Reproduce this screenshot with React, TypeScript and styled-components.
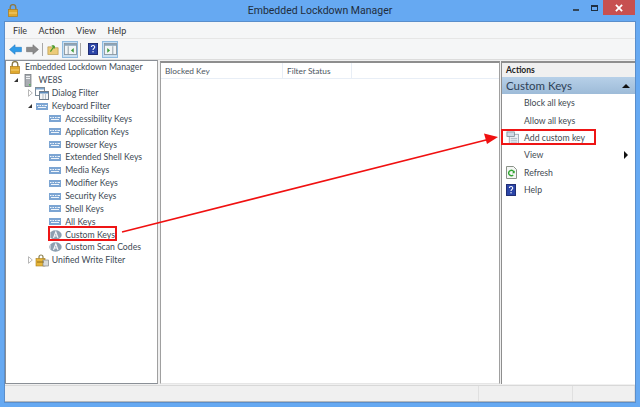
import styled, { createGlobalStyle } from "styled-components";

const GlobalStyle = createGlobalStyle`
  html, body { margin: 0; padding: 0; }
  body { font-family: Lato, Roboto, sans-serif; }
`;

const Lock = () => (
  <svg width="10" height="13" viewBox="0 0 10 13">
    <path d="M2.2 6V3.4a2.8 2.8 0 0 1 5.6 0V6" fill="none" stroke="#8a7a4a" strokeWidth="1.4" />
    <rect x="0.5" y="5.5" width="9" height="7" fill="#e0a92e" stroke="#b07d18" strokeWidth="0.7" />
    <rect x="1" y="8.5" width="8" height="1" fill="#f3d27a" />
  </svg>
);

const Server = () => (
  <svg width="12" height="13" viewBox="0 0 12 13">
    <rect x="3" y="0.5" width="6" height="12" fill="#a9adb2" stroke="#6d7278" strokeWidth="0.7" />
    <rect x="4" y="2" width="4" height="1" fill="#eef0f2" />
    <rect x="4" y="4" width="4" height="1" fill="#eef0f2" />
    <rect x="7" y="10" width="1.5" height="1.5" fill="#4cc04c" />
  </svg>
);

const Dialogs = () => (
  <svg width="14" height="13" viewBox="0 0 14 13">
    <rect x="0.5" y="0.5" width="9" height="8" fill="#fff" stroke="#7d8b99" />
    <rect x="1" y="1" width="8" height="1.5" fill="#7ea6cf" />
    <rect x="4.5" y="4.5" width="9" height="8" fill="#f4f6f8" stroke="#6f7d8b" />
    <rect x="5" y="5" width="8" height="1.5" fill="#5d8cbc" />
    <path d="M8 7v5M10.5 7v5" stroke="#9aa7b3" strokeWidth="0.7" />
  </svg>
);

const KeyboardIcon = () => (
  <svg width="12" height="7" viewBox="0 0 12 7">
    <rect width="12" height="7" fill="#7ca5d3" />
    <path d="M1 2.5h1.5M3.5 2.5H5M6 2.5h1.5M8.5 2.5H11M2 4.5h8" stroke="#eef4fa" strokeWidth="1" />
  </svg>
);

const CustomKeyIcon = () => (
  <svg width="13" height="10" viewBox="0 0 13 10">
    <ellipse cx="6.5" cy="5" rx="6.2" ry="4.7" fill="#8d9fb0" />
    <path d="M4.5 8 6.8 1.8 9 8M5.4 6h2.8" fill="none" stroke="#f4f6f8" strokeWidth="1.1" />
    <path d="M1.5 3v4" stroke="#c9d2da" strokeWidth="0.8" />
  </svg>
);

const FilterIcon = () => (
  <svg width="14" height="13" viewBox="0 0 14 13">
    <path d="M4 5V3a2 2 0 0 1 4 0v2" fill="none" stroke="#8a8152" strokeWidth="1.2" />
    <rect x="1" y="4.5" width="9" height="7.5" fill="#e6b53a" stroke="#a97e1c" strokeWidth="0.6" />
    <rect x="8" y="6" width="5.5" height="6" fill="#d9dcdd" stroke="#6f7477" strokeWidth="0.6" />
    <path d="M2 8h7" stroke="#7a5a10" strokeWidth="0.8" />
  </svg>
);

const ExpandOutline = () => (
  <svg width="5" height="8" viewBox="0 0 5 8">
    <path d="M0.5 0.7 4.3 4 0.5 7.3Z" fill="#fff" stroke="#a6a6a6" strokeWidth="0.8" />
  </svg>
);

const BackArrow = () => (
  <svg width="13" height="11" viewBox="0 0 14 12">
    <path d="M0.5 6 6.5 0.8V3.6H13.5V8.4H6.5V11.2Z" fill="#2f9be8" stroke="#1d78c4" strokeWidth="0.6" />
  </svg>
);

const ForwardArrow = () => (
  <svg width="13" height="11" viewBox="0 0 14 12">
    <path d="M13.5 6 7.5 0.8V3.6H0.5V8.4H7.5V11.2Z" fill="#8b8b8b" stroke="#6e6e6e" strokeWidth="0.6" />
  </svg>
);

const UpFolder = () => (
  <svg width="12" height="12" viewBox="0 0 14 14">
    <path d="M1 4.5h4l1 1h7v8H1Z" fill="#eccb78" stroke="#b08f3e" strokeWidth="0.7" />
    <path d="M4 10 8.5 3.5M8.5 3.5H5.5M8.5 3.5V6.5" fill="none" stroke="#4d9c2e" strokeWidth="1.5" />
  </svg>
);

const HelpIcon = ({ size = 10 }: { size?: number }) => (
  <svg width={size} height={size + 2} viewBox="0 0 11 13">
    <rect x="0.5" y="0.5" width="10" height="12" fill="#2b45a8" stroke="#16246b" />
    <path d="M3.7 4.4C3.8 2 7.4 2 7.4 4.3 7.4 5.8 5.5 5.8 5.5 7.6" fill="none" stroke="#fff" strokeWidth="1.2" />
    <rect x="4.9" y="8.8" width="1.3" height="1.4" fill="#fff" />
  </svg>
);

const PaneToggle = ({ flip }: { flip?: boolean }) => (
  <svg width="13" height="12" viewBox="0 0 14 13">
    <rect x="0.5" y="0.5" width="13" height="12" fill="#f2f5f7" stroke="#8c99a3" />
    <rect x="1" y="1" width="12" height="2" fill="#8aa5bc" />
    {flip ? (
      <>
        <path d="M9.5 3.5v9" stroke="#8c99a3" />
        <path d="M3.5 5.5 6.5 8 3.5 10.5Z" fill="#3f9c3a" />
      </>
    ) : (
      <>
        <path d="M4.5 3.5v9" stroke="#8c99a3" />
        <path d="M10.5 5.5 7.5 8 10.5 10.5Z" fill="#3f9c3a" />
      </>
    )}
  </svg>
);

const AddKeyIcon = () => (
  <svg width="13" height="13" viewBox="0 0 14 14">
    <rect x="3.5" y="3.5" width="10" height="10" fill="#eef2f6" stroke="#8a99a8" strokeWidth="0.8" />
    <rect x="1" y="1" width="8" height="5" fill="#cfdbe6" stroke="#76858f" strokeWidth="0.8" />
    <path d="M5 8h7M5 10h7M5 12h7" stroke="#9dacb9" strokeWidth="0.8" />
  </svg>
);

const RefreshIcon = () => (
  <svg width="11" height="13" viewBox="0 0 11 13">
    <path d="M0.5 0.5H7.5L10.5 3.5V12.5H0.5Z" fill="#f4f6f4" stroke="#8a9288" />
    <path d="M8 6.5A2.7 2.7 0 1 0 7.2 9" fill="none" stroke="#31a531" strokeWidth="1.4" />
    <path d="M8.6 4.4V7.2H6Z" fill="#31a531" />
  </svg>
);

type TreeItem = { label: string; depth: number; expander?: "open" | "closed"; icon: React.ReactNode };

const KEY_ITEMS = [
  "Accessibility Keys",
  "Application Keys",
  "Browser Keys",
  "Extended Shell Keys",
  "Media Keys",
  "Modifier Keys",
  "Security Keys",
  "Shell Keys",
  "All Keys",
];

const TREE: TreeItem[] = [
  { label: "Embedded Lockdown Manager", depth: 0, icon: <Lock /> },
  { label: "WE8S", depth: 1, expander: "open", icon: <Server /> },
  { label: "Dialog Filter", depth: 2, expander: "closed", icon: <Dialogs /> },
  { label: "Keyboard Filter", depth: 2, expander: "open", icon: <KeyboardIcon /> },
  ...KEY_ITEMS.map((label) => ({ label, depth: 3, icon: <KeyboardIcon /> })),
  { label: "Custom Keys", depth: 3, icon: <CustomKeyIcon /> },
  { label: "Custom Scan Codes", depth: 3, icon: <CustomKeyIcon /> },
  { label: "Unified Write Filter", depth: 2, expander: "closed", icon: <FilterIcon /> },
];

const App = () => (
  <Window>
    <GlobalStyle />
    <TitleBar>
      <TitleIcon>
        <Lock />
      </TitleIcon>
      <TitleText>Embedded Lockdown Manager</TitleText>
      <WindowButtons>
        <Minimize />
        <Maximize />
        <CloseButton>
          <svg width="8" height="8" viewBox="0 0 9 9">
            <path d="M1 1 8 8M8 1 1 8" stroke="#fff" strokeWidth="2" />
          </svg>
        </CloseButton>
      </WindowButtons>
    </TitleBar>

    <Content>
      <MenuBar>
        <MenuItem>File</MenuItem>
        <MenuItem>Action</MenuItem>
        <MenuItem>View</MenuItem>
        <MenuItem>Help</MenuItem>
      </MenuBar>

      <Toolbar>
        <ToolButton>
          <BackArrow />
        </ToolButton>
        <ToolButton>
          <ForwardArrow />
        </ToolButton>
        <ToolSeparator />
        <ToolButton>
          <UpFolder />
        </ToolButton>
        <ToolButton $active>
          <PaneToggle />
        </ToolButton>
        <ToolSeparator $wide />
        <ToolButton>
          <HelpIcon />
        </ToolButton>
        <ToolButton $active>
          <PaneToggle flip />
        </ToolButton>
      </Toolbar>

      <Panes>
        <TreePane>
          {TREE.map((item) => (
            <TreeRow key={item.label} $depth={item.depth}>
              <Expander>
                {item.expander === "open" && <OpenTriangle />}
                {item.expander === "closed" && (
                  <ClosedTriangle>
                    <ExpandOutline />
                  </ClosedTriangle>
                )}
              </Expander>
              <TreeIcon>{item.icon}</TreeIcon>
              <TreeLabel>{item.label}</TreeLabel>
            </TreeRow>
          ))}
        </TreePane>

        <ListPane>
          <ListHeader>
            <HeaderCell $width={122}>Blocked Key</HeaderCell>
            <HeaderCell $width={69}>Filter Status</HeaderCell>
          </ListHeader>
        </ListPane>

        <ActionsPane>
          <ActionsTitle>Actions</ActionsTitle>
          <ActionsGroup>
            Custom Keys
            <GroupCaret />
          </ActionsGroup>
          <ActionRow>Block all keys</ActionRow>
          <ActionRow>Allow all keys</ActionRow>
          <ActionRow $icon={<AddKeyIcon />}>Add custom key</ActionRow>
          <ActionRow $submenu>View</ActionRow>
          <ActionRow $icon={<RefreshIcon />}>Refresh</ActionRow>
          <ActionRow $icon={<HelpIcon />}>Help</ActionRow>
        </ActionsPane>
      </Panes>

      <StatusBar>
        <StatusCell $grow />
        <StatusCell $width={94} />
        <StatusCell $width={62} />
      </StatusBar>
    </Content>

    <CustomKeysBox />
    <AddKeyBox />
    <Annotation width="640" height="407" viewBox="0 0 640 407">
      <line x1="122" y1="232" x2="488" y2="139.5" stroke="#f01010" strokeWidth="1.5" />
      <path d="M498 137 484 133.5 487 144Z" fill="#f01010" />
    </Annotation>
  </Window>
);

const ActionRow = ({
  children,
  $icon,
  $submenu,
}: {
  children: React.ReactNode;
  $icon?: React.ReactNode;
  $submenu?: boolean;
}) => (
  <ActionRowBox>
    <ActionIcon>{$icon}</ActionIcon>
    <span>{children}</span>
    {$submenu && <SubmenuCaret />}
  </ActionRowBox>
);

export default App;

const Window = styled.div`
  position: relative;
  width: 640px;
  height: 407px;
  overflow: hidden;
  display: flex;
  flex-direction: column;
  background: #66a9f2;
  box-sizing: border-box;
  padding: 0 5px 5px;
  color: #333;
  font-size: 8.7px;
`;

const TitleBar = styled.div`
  position: relative;
  height: 22px;
  flex: none;
  display: flex;
  align-items: center;
  justify-content: center;
`;

const TitleIcon = styled.div`
  position: absolute;
  left: 3px;
  top: 4px;
  line-height: 0;
`;

const TitleText = styled.div`
  font-family: Roboto, sans-serif;
  font-size: 10.5px;
  color: #1f2d3d;
  margin-bottom: 1px;
`;

const WindowButtons = styled.div`
  position: absolute;
  right: 0;
  top: 0;
  display: flex;
  align-items: flex-start;
`;

const Minimize = styled.div`
  width: 6px;
  height: 2px;
  margin: 9px 12px 0 0;
  background: #33475b;
`;

const Maximize = styled.div`
  width: 5px;
  height: 3px;
  margin: 5px 5px 0 0;
  border: 1px solid #1f2f40;
  border-top-width: 2px;
`;

const CloseButton = styled.div`
  width: 32px;
  height: 15px;
  background: #c75050;
  display: flex;
  align-items: center;
  justify-content: center;
`;

const Content = styled.div`
  flex: 1;
  display: flex;
  flex-direction: column;
  background: #f0f0f0;
  min-height: 0;
  box-shadow: 0 0 0 1px #5a8ecb;
`;

const MenuBar = styled.div`
  height: 16px;
  flex: none;
  display: flex;
  align-items: center;
  background: #f5f6f7;
  padding-left: 2.5px;
  border-bottom: 1px solid #e6e6e6;
`;

const MenuItem = styled.div`
  padding: 0 6px 0 5.5px;
  font-size: 9px;
  color: #333;
`;

const Toolbar = styled.div`
  height: 20px;
  flex: none;
  display: flex;
  align-items: center;
  padding-left: 2px;
  background: #f5f6f7;
  border-bottom: 1px solid #dcdcdc;
`;

const ToolButton = styled.div<{ $active?: boolean }>`
  width: 16px;
  height: 17px;
  margin-right: 1px;
  display: flex;
  align-items: center;
  justify-content: center;
  box-sizing: border-box;
  background: ${({ $active }) => ($active ? "#c8dff2" : "transparent")};
  border: 1px solid ${({ $active }) => ($active ? "#8fbbe0" : "transparent")};
`;

const ToolSeparator = styled.div<{ $wide?: boolean }>`
  width: 1px;
  height: 13px;
  margin: 0 ${({ $wide }) => ($wide ? 4 : 2)}px 0 1px;
  background: #a8a8a8;
`;

const Panes = styled.div`
  flex: 1;
  display: flex;
  min-height: 0;
  background: #f0f0f0;
`;

const TreePane = styled.div`
  width: 153px;
  margin-right: 2px;
  flex: none;
  background: #fff;
  border: 1px solid #8a8f96;
  border-right-color: #a0a0a0;
  box-sizing: border-box;
`;

const TreeRow = styled.div<{ $depth: number }>`
  height: 12.87px;
  display: flex;
  align-items: center;
  padding-left: ${({ $depth }) => $depth * 13.4 + 1}px;
  white-space: nowrap;
`;

const Expander = styled.div`
  width: 0;
  position: relative;
`;

const OpenTriangle = styled.div`
  position: absolute;
  left: -6px;
  top: -2px;
  border-style: solid;
  border-width: 0 0 4px 4px;
  border-color: transparent transparent #333 transparent;
`;

const ClosedTriangle = styled.div`
  position: absolute;
  left: -6px;
  top: -4px;
  line-height: 0;
`;

const TreeIcon = styled.div`
  width: 14px;
  flex: none;
  display: flex;
  justify-content: center;
  line-height: 0;
  margin: 0 3px 0 1px;
`;

const TreeLabel = styled.span`
  color: #3d4a55;
  margin-bottom: 1px;
`;

const ListPane = styled.div`
  flex: 1;
  margin-top: 1px;
  margin-right: 1px;
  background: #fff;
  border: 1px solid #a0a0a0;
  border-top: 2px solid #8e8e8e;
  border-bottom-color: #e6e6e6;
  box-sizing: border-box;
`;

const ListHeader = styled.div`
  height: 15px;
  display: flex;
  border-bottom: 1px solid #e8eef6;
`;

const HeaderCell = styled.div<{ $width: number }>`
  width: ${({ $width }) => $width}px;
  padding-left: 4px;
  box-sizing: border-box;
  display: flex;
  align-items: center;
  font-size: 8.3px;
  border-right: 1px solid #e8eef6;
  color: #4c5661;
`;

const ActionsPane = styled.div`
  width: 134px;
  flex: none;
  margin-top: 1px;
  background: #fff;
  border-left: 1px solid #8e8e8e;
  border-top: 2px solid #8e8e8e;
  box-sizing: border-box;
`;

const ActionsTitle = styled.div`
  height: 14px;
  display: flex;
  align-items: center;
  padding-left: 4px;
  font-size: 8.5px;
  font-weight: 700;
  color: #1c1c1c;
  background: #f0f0f0;
`;

const ActionsGroup = styled.div`
  position: relative;
  height: 17px;
  display: flex;
  align-items: center;
  padding-left: 4px;
  font-size: 11.5px;
  color: #2e4257;
  background: linear-gradient(#b7d0e8, #9dbbd8);
`;

const GroupCaret = styled.div`
  position: absolute;
  right: 5px;
  top: 7px;
  border-style: solid;
  border-width: 0 4px 4px;
  border-color: transparent transparent #111 transparent;
`;

const ActionRowBox = styled.div`
  position: relative;
  height: 17.4px;
  display: flex;
  align-items: center;
  color: #3f4a52;
`;

const ActionIcon = styled.div`
  width: 22px;
  flex: none;
  padding-left: 4px;
  box-sizing: border-box;
  line-height: 0;
`;

const SubmenuCaret = styled.div`
  position: absolute;
  right: 7px;
  top: 5px;
  border-style: solid;
  border-width: 4px 0 4px 4px;
  border-color: transparent transparent transparent #111;
`;

const StatusBar = styled.div`
  height: 17px;
  flex: none;
  display: flex;
  box-sizing: border-box;
  margin-top: 1px;
  background: #f0f0f0;
  border-top: 1px solid #d8d8d8;
  border-bottom: 1px solid #b5b8bb;
`;

const StatusCell = styled.div<{ $grow?: boolean; $width?: number }>`
  flex: ${({ $grow }) => ($grow ? 1 : "none")};
  width: ${({ $width }) => ($width ? `${$width}px` : "auto")};
  box-sizing: border-box;
  border-right: 1px solid #e0e0e0;
`;

const CustomKeysBox = styled.div`
  position: absolute;
  left: 48px;
  top: 226px;
  width: 69px;
  height: 15px;
  box-sizing: border-box;
  border: 2px solid #ee1515;
`;

const AddKeyBox = styled.div`
  position: absolute;
  left: 501px;
  top: 129px;
  width: 95px;
  height: 16px;
  box-sizing: border-box;
  border: 2px solid #ee1515;
`;

const Annotation = styled.svg`
  position: absolute;
  left: 0;
  top: 0;
  pointer-events: none;
`;
